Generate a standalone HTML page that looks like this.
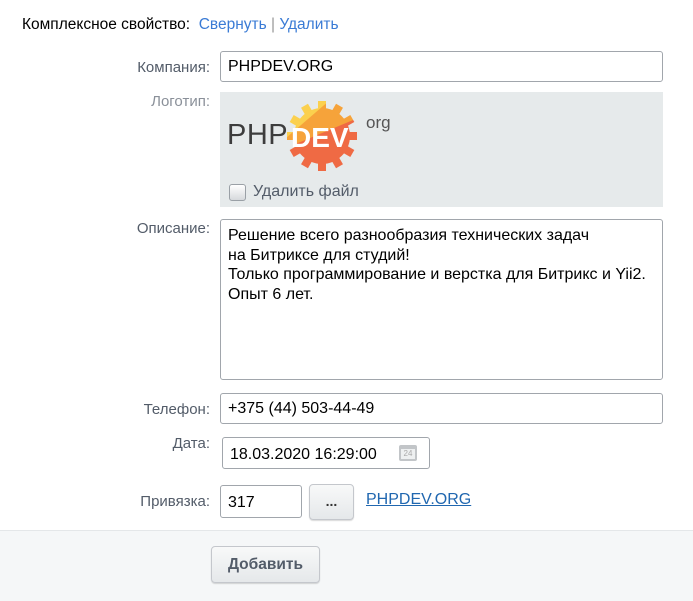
<!DOCTYPE html><html><head><meta charset="utf-8"><style>
body{margin:0;width:693px;height:600px;background:#fff;font-family:"Liberation Sans",sans-serif;position:relative;overflow:hidden}
.a{position:absolute}
.lbl{position:absolute;right:483px;font-size:15px;color:#535c69;text-align:right}
.inp{position:absolute;border:1px solid #a1a6ac;border-radius:3px;background:#fff;font-size:16px;color:#000;box-sizing:border-box;padding-left:7px}
.btn{position:absolute;border:1px solid #c4c7cc;border-radius:4px;background:linear-gradient(#f8f9f9,#e5e8ea);box-shadow:0 1px 1px rgba(0,0,0,.15);box-sizing:border-box;text-align:center;font-weight:bold;color:#535c69}
</style></head><body>
<div class="a" style="left:22px;top:16px;font-size:15.5px;color:#000">Комплексное свойство:&nbsp; <span style="color:#3a7bd5">Свернуть</span><span style="color:#999"> | </span><span style="color:#3a7bd5">Удалить</span></div>
<div class="lbl" style="top:59px">Компания:</div>
<div class="inp" style="left:220px;top:51px;width:443px;height:31px;line-height:29px">PHPDEV.ORG</div>
<div class="lbl" style="top:93px;color:#8a9099">Логотип:</div>
<div class="a" style="left:220px;top:92px;width:443px;height:115px;background:#e6eaeb"></div>
<div class="a" style="left:227px;top:119px;font-size:29px;color:#3d3d3d;letter-spacing:0.5px">PHP</div>
<svg class="a" style="left:286px;top:100px" width="72" height="72" viewBox="0 0 72 72">
<defs><mask id="g" maskUnits="userSpaceOnUse" x="0" y="0" width="72" height="72"><g transform="translate(36,36)" fill="#fff">
<circle r="28"/>
<rect x="-4" y="-35" width="8" height="70"/><rect x="-4" y="-35" width="8" height="70" transform="rotate(30)"/><rect x="-4" y="-35" width="8" height="70" transform="rotate(60)"/><rect x="-4" y="-35" width="8" height="70" transform="rotate(90)"/><rect x="-4" y="-35" width="8" height="70" transform="rotate(120)"/><rect x="-4" y="-35" width="8" height="70" transform="rotate(150)"/></g></mask></defs>
<g mask="url(#g)">
<rect width="72" height="72" fill="#f6a33a"/>
<path d="M0,48 L72,18 L72,72 L0,72Z" fill="#ef6a44"/>
<path d="M0,0 L44,0 L0,38Z" fill="#fbd04e"/>
</g>
<text x="5" y="47" font-family="Liberation Sans" font-weight="bold" font-size="28" fill="#fff">DEV</text>
</svg>
<div class="a" style="left:366px;top:113px;font-size:17px;color:#555">org</div>
<div class="a" style="left:229px;top:184px;width:15px;height:15px;border:1px solid #9aa0a6;border-radius:3px;background:linear-gradient(#fff,#d6d9dc)"></div>
<div class="a" style="left:253px;top:183px;font-size:16px;color:#535c69">Удалить файл</div>
<div class="lbl" style="top:220px">Описание:</div>
<div class="inp" style="left:220px;top:219px;width:443px;height:161px;padding-top:6px;line-height:19.5px">Решение всего разнообразия технических задач<br>на Битриксе для студий!<br>Только программирование и верстка для Битрикс и Yii2.<br>Опыт 6 лет.</div>
<div class="lbl" style="top:401px">Телефон:</div>
<div class="inp" style="left:220px;top:393px;width:443px;height:31px;line-height:29px">+375 (44) 503-44-49</div>
<div class="lbl" style="top:435px">Дата:</div>
<div class="inp" style="left:222px;top:437px;width:208px;height:32px;line-height:34px">18.03.2020 16:29:00</div>
<div class="a" style="left:399px;top:445px;width:18px;height:16px;background:#c2c5c8;border-radius:2px"><div style="margin:4px 2px 0;height:10px;background:#eef0f1;font-size:8px;color:#aaa;text-align:center;line-height:10px">24</div></div>
<div class="lbl" style="top:493px">Привязка:</div>
<div class="inp" style="left:220px;top:485px;width:82px;height:33px;line-height:33px">317</div>
<div class="btn" style="left:309px;top:484px;width:45px;height:36px;line-height:32px;font-size:14px;color:#333">...</div>
<div class="a" style="left:366px;top:491px;font-size:16px;color:#2067b0;text-decoration:underline">PHPDEV.ORG</div>
<div class="a" style="left:0;top:530px;width:693px;height:70px;background:#f5f7f8;border-top:1px solid #e4e7e9"></div>
<div class="btn" style="left:211px;top:546px;width:109px;height:37px;line-height:35px;font-size:15.5px">Добавить</div>
</body></html>
